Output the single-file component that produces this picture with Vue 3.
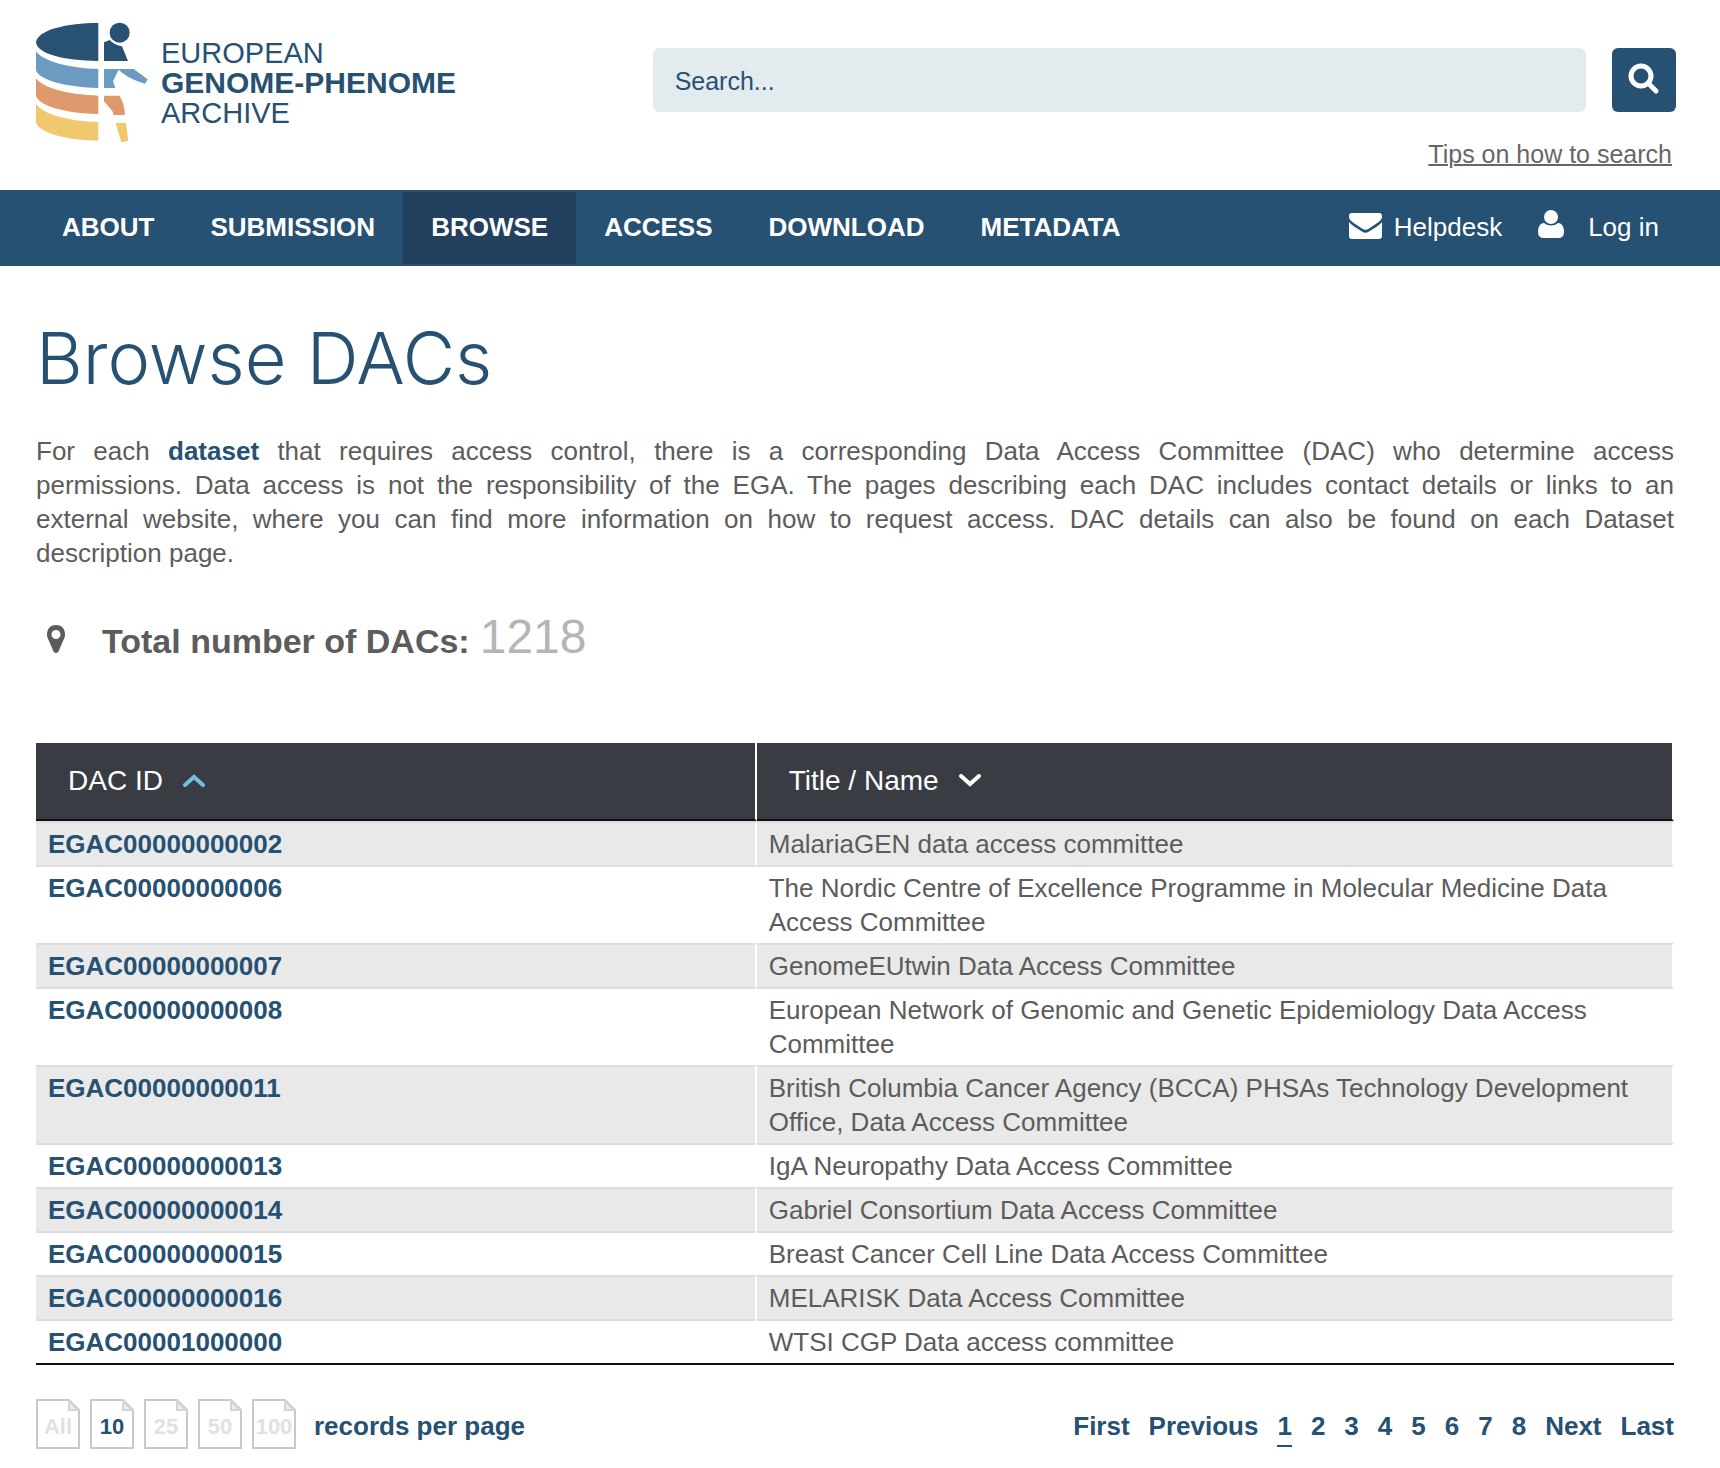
<script setup>
import { ref } from 'vue'

const query = ref('')
const perPage = ref('10')
const currentPage = ref('1')

const menu = ['About', 'Submission', 'Browse', 'Access', 'Download', 'Metadata']
const sizes = ['All', '10', '25', '50', '100']
const pages = ['First', 'Previous', '1', '2', '3', '4', '5', '6', '7', '8', 'Next', 'Last']

const dacs = [
  { id: 'EGAC00000000002', title: 'MalariaGEN data access committee' },
  { id: 'EGAC00000000006', title: 'The Nordic Centre of Excellence Programme in Molecular Medicine Data Access Committee' },
  { id: 'EGAC00000000007', title: 'GenomeEUtwin Data Access Committee' },
  { id: 'EGAC00000000008', title: 'European Network of Genomic and Genetic Epidemiology Data Access Committee' },
  { id: 'EGAC00000000011', title: 'British Columbia Cancer Agency (BCCA) PHSAs Technology Development Office, Data Access Committee' },
  { id: 'EGAC00000000013', title: 'IgA Neuropathy Data Access Committee' },
  { id: 'EGAC00000000014', title: 'Gabriel Consortium Data Access Committee' },
  { id: 'EGAC00000000015', title: 'Breast Cancer Cell Line Data Access Committee' },
  { id: 'EGAC00000000016', title: 'MELARISK Data Access Committee' },
  { id: 'EGAC00001000000', title: 'WTSI CGP Data access committee' }
]
</script>

<template>
  <div class="page">
    <header class="top">
      <a class="logo" href="#">
        <svg class="logo-mark" viewBox="48 36 336 363" aria-hidden="true">
          <g fill="#285274">
            <path d="M235 39V153C130 152 52 132 48 97C52 60 140 39 235 39Z" />
            <circle cx="299" cy="68" r="30" />
            <path d="M252 97L269 90C280 102 292 106 306 109L324 153H252Z" />
          </g>
          <g fill="#6b9bc0">
            <path d="M48 124C70 155 150 175 235 177V234C140 232 60 212 48 181Z" />
            <path d="M252 177H341L383 208L375 221C345 212 318 200 296 179L279 214L286 234H252Z" />
          </g>
          <g fill="#e0996c">
            <path d="M48 205C70 236 150 254 235 257V312C140 310 60 290 48 258Z" />
            <path d="M252 257H298C308 272 313 285 315 315H281L277 303L252 274Z" />
          </g>
          <g fill="#f0c96f">
            <path d="M48 281C70 315 150 333 235 336V392C140 390 60 370 48 338Z" />
            <path d="M287 339H318L325 393L304 397Z" />
          </g>
        </svg>
        <span class="logo-text">
          <span>EUROPEAN</span>
          <strong>GENOME-PHENOME</strong>
          <span>ARCHIVE</span>
        </span>
      </a>
      <div class="search">
        <form class="search-form" role="search" @submit.prevent>
          <input v-model="query" type="text" placeholder="Search..." aria-label="Search" />
          <button type="submit" aria-label="Submit search">
            <svg viewBox="0 0 32 32" fill="none" stroke="#fff" stroke-width="5" stroke-linecap="round">
              <circle cx="13" cy="13" r="10" />
              <path d="M21 21L28 28" />
            </svg>
          </button>
        </form>
        <a class="tips" href="#">Tips on how to search</a>
      </div>
    </header>

    <nav class="bar">
      <ul class="menu">
        <li v-for="item in menu" :key="item">
          <a href="#" :class="{ active: item === 'Browse' }">{{ item }}</a>
        </li>
      </ul>
      <div class="account">
        <a href="#">
          <svg class="mail" viewBox="0 0 33 26" fill="#fff" aria-hidden="true">
            <path d="M3 0H30Q33 0 33 3V4C33 6 31 8 29 9.500L20 15.500Q16.500 18 13 15.500L4 9.500C2 8 0 6 0 4V3Q0 0 3 0Z" />
            <path d="M0 9Q2 11.500 5 13.500L13 18.500Q16.500 21 20 18.500L28 13.500Q31 11.500 33 9V23Q33 26 30 26H3Q0 26 0 23Z" />
          </svg>
          <span>Helpdesk</span>
        </a>
        <a class="login" href="#">
          <svg class="user" viewBox="0 0 26 28" fill="#fff" aria-hidden="true">
            <circle cx="13" cy="7" r="7" />
            <path d="M6 13Q9 15.500 13 15.500T20 13C24 13 26 17 26 22Q26 28 20 28H6Q0 28 0 22C0 17 2 13 6 13Z" />
          </svg>
          <span>Log in</span>
        </a>
      </div>
    </nav>

    <main>
      <h1>Browse DACs</h1>
      <p class="intro">
        For each <a href="#">dataset</a> that requires access control, there is a corresponding Data Access Committee
        (DAC) who determine access permissions.&nbsp;Data access is not the responsibility of the EGA. The pages describing
        each DAC includes contact details or links to an external&nbsp;website, where you can find more information on how
        to request access. DAC details can also be found on each Dataset description&nbsp;page.
      </p>

      <div class="total">
        <svg class="pin" viewBox="0 0 20 28" fill="#5c5c5c" aria-hidden="true">
          <path fill-rule="evenodd" d="M10 0C4 0 1 4 1 9.500C1 12 2 14 3 16L7.500 26.500Q10 29.500 12.500 26.500L17 16C18 14 19 12 19 9.500C19 4 16 0 10 0ZM10 5A4.500 4.500 0 1 1 10 14A4.500 4.500 0 1 1 10 5Z" />
        </svg>
        <strong>Total number of DACs:</strong>
        <span class="count">1218</span>
      </div>

      <table>
        <thead>
          <tr>
            <th scope="col">
              <span class="head">DAC ID
                <svg class="sort" viewBox="0 0 22 14" fill="none" stroke="#71bde4" stroke-width="4" stroke-linecap="round"><path d="M2 11L11 3L20 11" /></svg>
              </span>
            </th>
            <th scope="col">
              <span class="head">Title / Name
                <svg class="sort" viewBox="0 0 22 14" fill="none" stroke="#fff" stroke-width="4" stroke-linecap="round"><path d="M2 2L11 10L20 2" /></svg>
              </span>
            </th>
          </tr>
        </thead>
        <tbody>
          <tr v-for="dac in dacs" :key="dac.id">
            <td><a href="#">{{ dac.id }}</a></td>
            <td>{{ dac.title }}</td>
          </tr>
        </tbody>
      </table>

      <footer class="controls">
        <div class="sizes">
          <button
            v-for="size in sizes"
            :key="size"
            type="button"
            :class="{ chosen: size === perPage }"
            @click="perPage = size"
          >
            <svg class="sheet" viewBox="0 0 44 50" fill="none" stroke="#c9c9c9" stroke-width="2" aria-hidden="true">
              <path d="M1 1H33L43 11V49H1Z" />
              <path d="M33 2V11H42Z" fill="#ededed" stroke="#d4d4d4" />
            </svg>
            <span>{{ size }}</span>
          </button>
          <span class="sizes-label">records per page</span>
        </div>
        <nav class="pager" aria-label="Pages">
          <a v-for="page in pages" :key="page" href="#" :class="{ current: page === currentPage }">{{ page }}</a>
        </nav>
      </footer>
    </main>
  </div>
</template>

<style>
body {
  margin: 0;
  background: #fff;
}
</style>

<style scoped>
.page {
  font-family: "Liberation Sans", Arial, Helvetica, sans-serif;
  font-size: 26px;
  line-height: 34px;
  color: #5c5c5c;
}

a {
  color: #265173;
  font-weight: bold;
  text-decoration: none;
}

.top {
  display: flex;
  justify-content: space-between;
  align-items: flex-start;
  padding: 22px 44px 19px 36px;
}

.logo {
  display: flex;
  gap: 13px;
  font-weight: normal;
}

.logo-mark {
  width: 112px;
  height: 121px;
}

.logo-text {
  display: flex;
  flex-direction: column;
  padding-top: 16px;
  font-size: 29px;
  line-height: 30px;
}

.logo-text strong {
  font-size: 30px;
}

.search {
  display: flex;
  flex-direction: column;
  width: 62.4%;
  padding-top: 26px;
}

.search-form {
  display: flex;
  gap: 26px;
}

.search-form input {
  flex: 1;
  min-width: 0;
  height: 64px;
  box-sizing: border-box;
  padding: 2px 22px 0;
  border: 0;
  border-radius: 6px;
  background: #e4ebee;
  color: #265173;
  font: inherit;
  font-size: 25px;
}

.search-form input::placeholder {
  color: #265173;
  opacity: 1;
}

.search-form button {
  display: flex;
  align-items: flex-start;
  justify-content: center;
  width: 64px;
  height: 64px;
  padding: 15px 0 0;
  border: 0;
  border-radius: 6px;
  background: #265173;
}

.search-form svg {
  width: 32px;
  height: 32px;
}

.tips {
  align-self: flex-end;
  margin: 25px 4px 0 0;
  color: #666;
  font-size: 25px;
  font-weight: normal;
  text-decoration: underline;
  text-decoration-thickness: 2px;
}

.bar {
  display: flex;
  justify-content: space-between;
  padding: 2px 61px 2px 34px;
  background: #265173;
}

.menu {
  display: flex;
  margin: 0;
  padding: 0;
  list-style: none;
}

.menu a {
  display: block;
  padding: 18px 28px 20px;
  color: #fff;
  text-transform: uppercase;
}

.menu a.active {
  background: #23415f;
}

.account {
  display: flex;
  gap: 36px;
  padding-top: 18px;
}

.account a {
  display: flex;
  gap: 12px;
  color: #fff;
  font-weight: normal;
}

.account .login {
  gap: 24px;
}

.mail {
  width: 33px;
  height: 26px;
  padding-top: 3px;
}

.user {
  width: 26px;
  height: 28px;
}

main {
  padding: 50px 46px 18px 36px;
}

h1 {
  margin: 0;
  color: #265173;
  font-family: Inter, "Liberation Sans", sans-serif;
  font-size: 72px;
  font-weight: 300;
  line-height: 84px;
}

.intro {
  margin: 34px 0 39px;
  text-align: justify;
}

.total {
  display: flex;
  align-items: baseline;
  font-size: 34px;
  line-height: 56px;
}

.pin {
  width: 20px;
  height: 28px;
  margin: 0 36px 0 10px;
}

.count {
  margin-left: 10px;
  color: #b5b5b5;
  font-size: 48px;
}

table {
  width: 100%;
  margin-top: 74px;
  border-collapse: separate;
  border-spacing: 0;
  border-bottom: 2px solid #111;
  table-layout: fixed;
}

th {
  height: 76px;
  padding: 0 32px;
  border-right: 2px solid #fff;
  border-bottom: 2px solid #111;
  background: #393c43;
  color: #fff;
  font-size: 28px;
  font-weight: normal;
  text-align: left;
}

th:first-child {
  width: 44%;
  box-sizing: border-box;
  height: 78px;
}

.head {
  display: flex;
  align-items: center;
  gap: 20px;
}

.sort {
  width: 22px;
  height: 14px;
}

td {
  padding: 4px 12px;
  border-top: 2px solid #ddd;
  border-right: 2px solid #fff;
  vertical-align: top;
}

tbody tr:nth-child(odd) td {
  background: #e9e9e9;
}

.controls {
  display: flex;
  justify-content: space-between;
  margin-top: 34px;
}

.sizes {
  display: flex;
  gap: 10px;
}

.sizes button {
  display: grid;
  width: 44px;
  height: 50px;
  padding: 0;
  border: 0;
  background: none;
  color: #e1e1e1;
  font: inherit;
  font-size: 22px;
  font-weight: bold;
}

.sizes button > * {
  grid-area: 1 / 1;
}

.sizes button span {
  padding-top: 11px;
}

.sizes .chosen {
  color: #265173;
}

.sheet {
  width: 44px;
  height: 50px;
}

.sizes-label {
  margin-left: 8px;
  padding-top: 10px;
  color: #265173;
  font-weight: bold;
}

.pager {
  display: flex;
  gap: 19px;
  padding-top: 10px;
}

.pager a {
  height: 36px;
}

.pager .current {
  border-bottom: 2px solid #265173;
}
</style>
